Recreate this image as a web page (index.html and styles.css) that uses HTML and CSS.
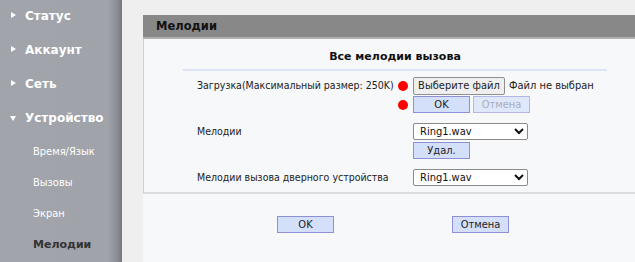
FILE: index.html
```html
<!DOCTYPE html>
<html>
<head>
    <title>Мелодии</title>
    <link rel="stylesheet" href="styles.css">
</head>
<body>
    <div class="layout">
        <nav class="sidebar">
            <ul class="menu">
                <li class="menu-item"><span class="arrow"></span>Статус</li>
                <li class="menu-item"><span class="arrow"></span>Аккаунт</li>
                <li class="menu-item"><span class="arrow"></span>Сеть</li>
                <li class="menu-item open"><span class="arrow down"></span>Устройство</li>
                <li class="sub-item">Время/Язык</li>
                <li class="sub-item">Вызовы</li>
                <li class="sub-item">Экран</li>
                <li class="sub-item active">Мелодии</li>
            </ul>
        </nav>

        <main class="content">
            <section class="panel">
                <div class="panel-head">Мелодии</div>
                <div class="panel-body">
                    <div class="form">
                        <div class="form-title">Все мелодии вызова</div>

                        <div class="row">
                            <div class="label">Загрузка(Максимальный размер: 250K)</div>
                            <div class="controls">
                                <div class="line">
                                    <span class="dot"></span>
                                    <button class="btn-file">Выберите файл</button>
                                    <span class="file-name">Файл не выбран</span>
                                </div>
                                <div class="line">
                                    <span class="dot"></span>
                                    <button class="btn">OK</button>
                                    <button class="btn" disabled>Отмена</button>
                                </div>
                            </div>
                        </div>

                        <div class="row">
                            <div class="label">Мелодии</div>
                            <div class="controls indent">
                                <select class="select">
                                    <option>Ring1.wav</option>
                                </select>
                                <button class="btn">Удал.</button>
                            </div>
                        </div>

                        <div class="row">
                            <div class="label">Мелодии вызова дверного устройства</div>
                            <div class="controls indent">
                                <select class="select">
                                    <option>Ring1.wav</option>
                                </select>
                            </div>
                        </div>
                    </div>
                </div>

                <div class="actions">
                    <button class="btn">OK</button>
                    <button class="btn">Отмена</button>
                </div>
            </section>
        </main>
    </div>
</body>
</html>
```

FILE: styles.css
```css
body {
    margin: 0;
    font-family: "DejaVu Sans Condensed", "Liberation Sans", Arial, sans-serif;
    font-size: 10.5px;
    color: #222;
}
.layout {
    display: flex;
    height: 262px;
    overflow: hidden;
}

/* sidebar */
.sidebar {
    width: 122px;
    flex-shrink: 0;
    background: linear-gradient(to right, #a1a4ab 0, #a0a3aa 108px, #8d9097 116px, #767980 122px);
}
.menu {
    list-style: none;
    margin: 0;
    padding: 0;
}
.menu-item {
    height: 34px;
    line-height: 32px;
    padding-left: 25px;
    position: relative;
    color: #fff;
    font-family: "DejaVu Sans", Verdana, sans-serif;
    font-weight: bold;
    font-size: 12px;
}
.arrow {
    position: absolute;
    left: 11px;
    top: 12px;
    width: 0;
    height: 0;
    border-left: 5px solid #fff;
    border-top: 3px solid transparent;
    border-bottom: 3px solid transparent;
}
.arrow.down {
    left: 10px;
    top: 14px;
    border-top: 5px solid #fff;
    border-left: 3px solid transparent;
    border-right: 3px solid transparent;
    border-bottom: 0;
}
.sub-item {
    height: 31px;
    line-height: 31px;
    padding-left: 33px;
    font-size: 11px;
    color: #fff;
}
.sub-item.active {
    color: #333;
    font-family: "DejaVu Sans", Verdana, sans-serif;
    font-size: 11px;
    font-weight: bold;
}

/* main area */
.content {
    flex: 1;
    background: #efefef;
    padding: 15px 0 0 21px;
}
.panel {
    width: 500px;
    height: 100%;
    background: #f7f8fa;
}
.panel-head {
    height: 22px;
    line-height: 22px;
    background: #888;
    border-bottom: 2px solid #b0b0b0;
    padding-left: 13px;
    font-family: "DejaVu Sans", Verdana, sans-serif;
    font-size: 11.5px;
    font-weight: bold;
    color: #111;
}
.panel-body {
    border-left: 1px solid #d0d0d0;
    border-bottom: 2px solid #dcdcdc;
    padding-bottom: 6px;
}
.form {
    width: 424px;
    margin-left: 39px;
}
.form-title {
    text-align: center;
    font-family: "DejaVu Sans", Verdana, sans-serif;
    font-size: 11px;
    font-weight: bold;
    color: #111;
    height: 30px;
    line-height: 36px;
    border-bottom: 2px solid #dde4f4;
    margin-bottom: 6px;
}
.row {
    display: flex;
    margin-bottom: 10px;
}
.row:last-child {
    margin-bottom: 0;
}
.label {
    width: 201px;
    padding-left: 14px;
    line-height: 17px;
    white-space: nowrap;
}
.controls {
    display: flex;
    flex-direction: column;
    gap: 2px;
}
.controls.indent {
    padding-left: 15px;
}
.line {
    display: flex;
    align-items: center;
    height: 17px;
    white-space: nowrap;
}
.dot {
    width: 10px;
    height: 10px;
    border-radius: 50%;
    background: #f00;
    margin-right: 5px;
}

/* buttons */
.btn {
    width: 57px;
    height: 17px;
    padding: 0;
    margin-right: 3px;
    font-family: inherit;
    font-size: 11px;
    line-height: 15px;
    color: #222;
    background: #d4dffa;
    border: 1px solid #8f8fd8;
}
.btn:disabled {
    color: #a9adc0;
    background: #dfe7fa;
    border-color: #b5b5e6;
}
.btn-file {
    width: 92px;
    height: 18px;
    padding: 0;
    font-family: inherit;
    font-size: 11px;
    white-space: nowrap;
    color: #222;
    background: #efefef;
    border: 1px solid #8f8f8f;
    border-radius: 2px;
}
.file-name {
    margin-left: 4px;
    font-size: 11px;
}
.select {
    width: 115px;
    height: 17px;
    padding: 0 2px;
    font-family: inherit;
    font-size: 11px;
    color: #111;
    background: #fff;
    border: 1px solid #8a8a8a;
    border-radius: 2px;
}

.actions {
    display: flex;
    gap: 115px;
    margin: 22px 0 0 134px;
}
```
